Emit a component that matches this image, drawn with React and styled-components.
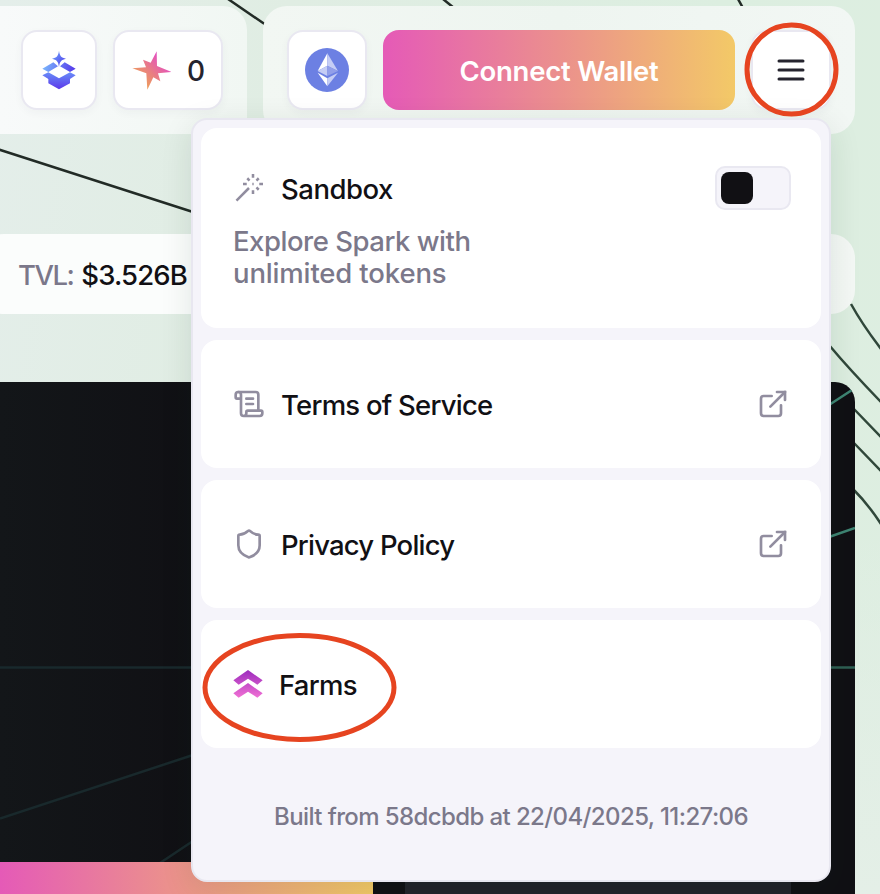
import React from "react";
import styled, { createGlobalStyle } from "styled-components";
import { ExternalLink, ScrollText, Shield } from "lucide-react";

const GlobalStyle = createGlobalStyle`
  * { box-sizing: border-box; }
  body {
    margin: 0;
    font-family: Inter, "Liberation Sans", sans-serif;
    font-weight: 500;
    color: #111014;
  }
`;

const Page = styled.main`
  position: relative;
  width: 880px;
  height: 894px;
  overflow: hidden;
  background:
    linear-gradient(180deg, rgba(228, 239, 231, 0) 60%, #e4efe7 100%),
    linear-gradient(100deg, #e4eeea 0%, #e0ede3 28%, #dceee0 70%, #deeee1 100%);
`;

const Backdrop = styled.svg`
  position: absolute;
  inset: 0;
`;

const Content = styled.div`
  position: relative;
  display: flex;
  flex-direction: column;
  width: 855px;
  padding-top: 6px;
`;

const Header = styled.header`
  display: flex;
  gap: 16px;
  height: 128px;
`;

const HeaderGroup = styled.div`
  display: flex;
  align-items: center;
  justify-content: flex-end;
  gap: 16px;
  padding-right: 24px;
  width: ${(p) => p.$width}px;
  border-radius: ${(p) => p.$radius};
  background: ${(p) => p.$background};
`;

const Tile = styled.button`
  display: flex;
  flex: none;
  align-items: center;
  justify-content: center;
  gap: 16px;
  width: ${(p) => p.$width}px;
  height: 80px;
  padding: 0;
  border: 2px solid #e9e8f1;
  border-radius: 16px;
  background: #fff;
  box-shadow: 0 3px 8px rgba(40, 40, 70, 0.04);
  font: 500 28px Inter, sans-serif;
  color: #25242e;
`;

const Count = styled.span`
  padding-top: 2px;
`;

const WalletButton = styled.button`
  flex: none;
  width: 352px;
  height: 80px;
  padding: 2px 0 0;
  border: 0;
  border-radius: 16px;
  background: linear-gradient(90deg, #e55ab7 0%, #eb908d 50%, #f3c967 100%);
  color: #fff;
  font: 600 27.5px Inter, sans-serif;
  letter-spacing: ${(p) => p.$track}px;
`;

const StatsBar = styled.section`
  display: flex;
  align-items: center;
  gap: 8px;
  height: 80px;
  margin: 100px 0 68px -20px;
  padding: 2px 0 0 38px;
  border-radius: 24px;
  background: linear-gradient(90deg, #fbfdfc 30%, #f4f8f5 100%);
  font-size: 27.5px;
`;

const StatLabel = styled.span`
  color: #7b788a;
  letter-spacing: ${(p) => p.$track}px;
`;

const StatValue = styled.span`
  letter-spacing: ${(p) => p.$track}px;
`;

const Panel = styled.section`
  display: flex;
  flex-direction: column;
  height: 512px;
  border-top-right-radius: 20px;
  overflow: hidden;
  background: linear-gradient(90deg, #131619 0%, #101014 24%);
`;

const PanelLines = styled.svg`
  display: block;
  flex: none;
`;

const PanelFooter = styled.div`
  display: flex;
  gap: 32px;
  height: 32px;
`;

const PrimaryBar = styled.div`
  width: 373px;
  background: linear-gradient(90deg, #e55ab7 0%, #eb908d 45%, #f3c967 100%);
`;

const SecondaryBar = styled.div`
  width: 386px;
  background: #22232a;
`;

const Menu = styled.nav`
  position: absolute;
  top: 118px;
  left: 191px;
  display: flex;
  flex-direction: column;
  gap: 12px;
  width: 640px;
  height: 764px;
  padding: 8px;
  border: 2px solid #e8e7f0;
  border-radius: 16px;
  background: #f5f4fa;
  box-shadow: 0 8px 32px rgba(20, 50, 30, 0.11);
`;

const MenuCard = styled.div`
  display: flex;
  flex-direction: column;
  justify-content: ${(p) => (p.$tall ? "flex-start" : "center")};
  gap: 15px;
  height: ${(p) => (p.$tall ? 200 : 128)}px;
  padding: ${(p) => (p.$tall ? "38px 30px 0 32px" : "0 32px")};
  border-radius: 16px;
  background: #fff;
`;

const MenuRow = styled.div`
  display: flex;
  align-items: center;
  gap: 16px;
  height: 44px;
  color: #918d9f;
`;

const MenuTitle = styled.span`
  flex: 1;
  padding-top: 1px;
  font-size: 27.5px;
  line-height: 34px;
  letter-spacing: ${(p) => p.$track}px;
  color: #111014;
`;

const Description = styled.div`
  font-size: 27.5px;
  line-height: 32px;
  color: #7b788a;
  white-space: nowrap;
`;

const DescriptionLine = styled.div`
  letter-spacing: ${(p) => p.$track}px;
`;

const Toggle = styled.button`
  display: flex;
  align-items: center;
  width: 76px;
  height: 44px;
  padding: 0 4px;
  border: 2px solid #e9e8f1;
  border-radius: 10px;
  background: #f5f4fa;
`;

const ToggleKnob = styled.span`
  width: 32px;
  height: 32px;
  border-radius: 8px;
  background: #111014;
`;

const BuildInfo = styled.footer`
  display: flex;
  align-items: center;
  justify-content: center;
  flex: 1;
  padding-top: 1px;
  font-size: 24px;
  letter-spacing: ${(p) => p.$track}px;
  color: #7b788a;
  white-space: nowrap;
`;

const Annotations = styled.svg`
  position: absolute;
  inset: 0;
  pointer-events: none;
`;

const WandIcon = () => (
  <svg width="32" height="32" viewBox="0 0 24 24" fill="none" stroke="currentColor" strokeWidth="1.9">
    <path d="M15 4.3V1.5M15 16.5v-2.8M7.5 9h2.8M19.7 9h2.8M17.6 11.6l1.7 1.7M14.5 9h1M17.6 6.4l1.7-1.7M2.6 21.4 12 12M12.4 6.4l-1.7-1.7" />
  </svg>
);

const BoxIcon = () => (
  <svg width="36" height="40" viewBox="123 150 108 120">
    <defs>
      <linearGradient id="boxTop" x1="0" y1="0" x2="1" y2="1">
        <stop stopColor="#6aa6fb" />
        <stop offset="1" stopColor="#5236ea" />
      </linearGradient>
      <linearGradient id="boxFlap" gradientUnits="userSpaceOnUse" x1="135" y1="195" x2="220" y2="215">
        <stop stopColor="#78b0fb" />
        <stop offset="1" stopColor="#563ceb" />
      </linearGradient>
      <linearGradient id="boxBase" x1="0" y1="0" x2="0" y2="1">
        <stop stopColor="#688cf8" />
        <stop offset="1" stopColor="#5c37ea" />
      </linearGradient>
    </defs>
    <path fill="url(#boxTop)" d="M177 152c2 16 7 21 21 24-14 3-19 8-21 25-2-17-7-22-21-25 14-3 19-8 21-24z" />
    <path fill="url(#boxFlap)" d="M127 206l33-19 14 12-29 17zM227 206l-33-19-14 12 30 17z" />
    <path fill="url(#boxBase)" d="M127 226l18-9 32 18 33-18 17 9-17 11v13l-33 18-32-18v-13z" />
  </svg>
);

const StarIcon = () => (
  <svg width="40" height="40" viewBox="393 151 120 120">
    <defs>
      <linearGradient id="star" gradientUnits="userSpaceOnUse" x1="415" y1="245" x2="485" y2="180">
        <stop stopColor="#eea258" />
        <stop offset="0.5" stopColor="#e97d83" />
        <stop offset="1" stopColor="#e452bd" />
      </linearGradient>
    </defs>
    <path
      fill="url(#star)"
      d="M470 155L471 199L514 217L474 221L481 245L460 233L442 270L439 221L397 206L438 203L429 180L452 189Z"
    />
  </svg>
);

const EthereumIcon = () => (
  <svg width="44" height="44" viewBox="0 0 132 132">
    <circle cx="66" cy="66" r="66" fill="#6c80e3" />
    <path fill="#fff" d="M67 16v37L38 69z" />
    <path fill="#c5cdf5" d="M67 16v37l32 16z" />
    <path fill="#c5cdf5" d="M67 53v31L38 69z" />
    <path fill="#929fe9" d="M67 53v31l32-15z" />
    <path fill="#fff" d="M38 74l29 17v24z" />
    <path fill="#c5cdf5" d="M99 74L67 91v24z" />
  </svg>
);

const HamburgerIcon = () => (
  <svg width="36" height="36" viewBox="0 0 36 36" stroke="#25242e" strokeWidth="3" strokeLinecap="round">
    <path d="M6 9h24M6 18h24M6 27h24" />
  </svg>
);

const FarmsIcon = () => (
  <svg width="30" height="32" viewBox="129 174 90 96">
    <defs>
      <linearGradient id="farms" gradientUnits="userSpaceOnUse" x1="0" y1="180" x2="0" y2="263">
        <stop stopColor="#9c2bbd" />
        <stop offset="1" stopColor="#f070d4" />
      </linearGradient>
    </defs>
    <path
      fill="url(#farms)"
      d="M174 180l44 31-16 13-28-18-28 18-16-13zM174 219l44 31-16 13-28-18-28 18-16-13z"
    />
  </svg>
);

const links = [
  { title: "Terms of Service", Icon: ScrollText, track: -0.76 },
  { title: "Privacy Policy", Icon: Shield, track: -0.8 },
];

export default function App() {
  return (
    <Page>
      <GlobalStyle />
      <Backdrop width="880" height="894" fill="none" stroke="#222b26" strokeWidth="2.5">
        <path d="M228-1l38 26M443-1l11 9M738-1l5 9M-1 149.500L193 212" />
        <path
          stroke="#30473a"
          d="M851 304Q862 324 881 349M829 345Q850 370 881 402M853 408L881 437M853 442L881 471M853 489Q868 504 881 524"
        />
      </Backdrop>

      <Content>
        <Header>
          <HeaderGroup $width={247} $radius="0 24px 0 0" $background="linear-gradient(90deg, #f8fafa, #f1f7f3)">
            <Tile $width={76} aria-label="Sandbox network">
              <BoxIcon />
            </Tile>
            <Tile $width={110}>
              <StarIcon />
              <Count>0</Count>
            </Tile>
          </HeaderGroup>
          <HeaderGroup $width={592} $radius="24px" $background="linear-gradient(90deg, #f2f7f3, #eef5f0 50%, #f2f7f4)">
            <Tile $width={80} aria-label="Ethereum">
              <EthereumIcon />
            </Tile>
            <WalletButton $track={-0.22}>Connect Wallet</WalletButton>
            <Tile $width={80} aria-label="Menu">
              <HamburgerIcon />
            </Tile>
          </HeaderGroup>
        </Header>

        <StatsBar>
          <StatLabel $track={-1.5}>TVL:</StatLabel>
          <StatValue $track={-0.9}>$3.526B</StatValue>
        </StatsBar>

        <Panel>
          <PanelLines width="855" height="480" fill="none" strokeWidth="2.5">
            <path stroke="#19292c" d="M0 285.500H200M0 436.500L193 373M160 481L193 459" />
            <path stroke="#3e8573" d="M829 23L855 6M829 155L855 146" />
            <path stroke="#2e5f53" d="M829 285.500H855" />
          </PanelLines>
          <PanelFooter>
            <PrimaryBar />
            <SecondaryBar />
          </PanelFooter>
        </Panel>
      </Content>

      <Menu>
        <MenuCard $tall>
          <MenuRow>
            <WandIcon />
            <MenuTitle $track={-0.5}>Sandbox</MenuTitle>
            <Toggle role="switch" aria-checked="false" aria-label="Sandbox">
              <ToggleKnob />
            </Toggle>
          </MenuRow>
          <Description>
            <DescriptionLine $track={-0.48}>Explore Spark with</DescriptionLine>
            <DescriptionLine $track={-0.15}>unlimited tokens</DescriptionLine>
          </Description>
        </MenuCard>
        {links.map(({ title, Icon, track }) => (
          <MenuCard key={title}>
            <MenuRow>
              <Icon size={32} strokeWidth={2} />
              <MenuTitle $track={track}>{title}</MenuTitle>
              <ExternalLink size={32} strokeWidth={2} strokeLinejoin="miter" />
            </MenuRow>
          </MenuCard>
        ))}
        <MenuCard>
          <MenuRow>
            <FarmsIcon />
            <MenuTitle $track={-0.75}>Farms</MenuTitle>
          </MenuRow>
        </MenuCard>
        <BuildInfo $track={-0.6}>Built from 58dcbdb at 22/04/2025, 11:27:06</BuildInfo>
      </Menu>

      <Annotations width="880" height="894" fill="none" stroke="#e64420" strokeWidth="5">
        <circle cx="791.500" cy="69.500" r="44.500" />
        <ellipse cx="299.500" cy="687.500" rx="94.500" ry="52" />
      </Annotations>
    </Page>
  );
}
